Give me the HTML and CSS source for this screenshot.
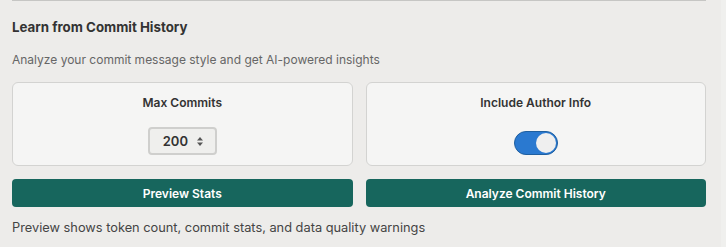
FILE: index.html
```html
<!DOCTYPE html>
<html>
<head>
<meta charset="utf-8">
<link rel="stylesheet" href="styles.css">
</head>
<body>
<div class="page">
  <section class="section">
    <h3 class="title">Learn from Commit History</h3>
    <p class="desc">Analyze your commit message style and get AI-powered insights</p>
    <div class="grid">
      <div class="card">
        <div class="label">Max Commits</div>
        <div class="number">
          <span class="value">200</span>
          <svg class="spin" width="8" height="11" viewBox="0 0 8 11"><path d="M4 1 L7 4.5 H1 Z" fill="#555"/><path d="M4 10 L7 6.5 H1 Z" fill="#555"/></svg>
        </div>
      </div>
      <div class="card">
        <div class="label">Include Author Info</div>
        <div class="toggle"><span class="knob"></span></div>
      </div>
      <button class="btn">Preview Stats</button>
      <button class="btn">Analyze Commit History</button>
    </div>
    <p class="foot">Preview shows token count, commit stats, and data quality warnings</p>
  </section>
  <div class="scroll"></div>
</div>
</body>
</html>
```
FILE: styles.css
```css
html, body {
  margin: 0;
  padding: 0;
  background: #edecea;
  font-family: Inter, "Noto Sans", sans-serif;
}
.page {
  display: flex;
  height: 247px;
}
.section {
  flex: 1;
  margin: 0 15px 0 12px;
  border-top: 1px solid #c6c6c4;
}
.scroll {
  width: 5px;
  background: #f0f0ee;
}
.title {
  margin: 0;
  padding-top: 18px;
  font-size: 13.3px;
  font-weight: 700;
  line-height: 17px;
  color: #333;
}
.desc {
  margin: 16px 0 0;
  font-size: 12px;
  line-height: 16px;
  color: #666;
}
.grid {
  margin-top: 14px;
  display: grid;
  grid-template-columns: 1fr 1fr;
  column-gap: 13px;
  row-gap: 13px;
}
.card {
  height: 82px;
  border: 1px solid #d3d3d1;
  border-radius: 6px;
  background: #f5f5f4;
  display: flex;
  flex-direction: column;
  align-items: center;
}
.label {
  margin-top: 12px;
  font-size: 12px;
  font-weight: 600;
  line-height: 16px;
  color: #333;
}
.number {
  margin-top: 16px;
  height: 24px;
  border: 2px solid #cfcfcd;
  border-radius: 4px;
  background: #efefed;
  display: flex;
  align-items: center;
  justify-content: space-between;
  padding: 0 11px 0 13px;
  box-sizing: content-box;
  width: 41px;
}
.value {
  font-size: 13px;
  font-weight: 600;
  color: #333;
}
.toggle {
  margin-top: 20px;
  width: 40px;
  height: 22px;
  border: 1px solid #1f5f9f;
  border-radius: 12px;
  background: #2a79d0;
  display: flex;
  align-items: center;
  justify-content: flex-end;
  padding: 0 1px;
}
.knob {
  width: 20px;
  height: 20px;
  border-radius: 50%;
  background: #efefef;
}
.btn {
  height: 28px;
  border: none;
  border-radius: 4px;
  background: #17665d;
  color: #fff;
  font-family: Inter, "Noto Sans", sans-serif;
  font-size: 12px;
  font-weight: 600;
  padding: 0;
}
.foot {
  margin: 13px 0 0;
  font-size: 12.8px;
  line-height: 16px;
  color: #444;
}
```
